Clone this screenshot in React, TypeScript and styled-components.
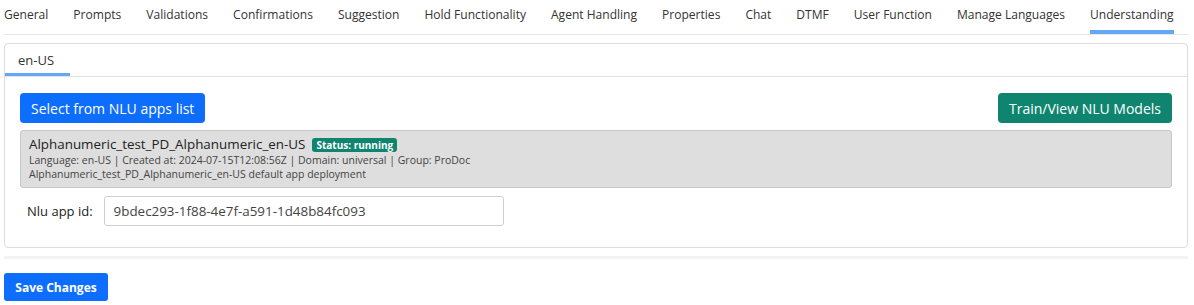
import styled, { createGlobalStyle } from "styled-components";

const tabs = [
  "General",
  "Prompts",
  "Validations",
  "Confirmations",
  "Suggestion",
  "Hold Functionality",
  "Agent Handling",
  "Properties",
  "Chat",
  "DTMF",
  "User Function",
  "Manage Languages",
  "Understanding",
];

const GlobalStyle = createGlobalStyle`
  body {
    margin: 0;
    background: #fff;
    font-family: "Open Sans", "Liberation Sans", sans-serif;
    color: #333;
  }
`;

export default function App() {
  return (
    <>
      <GlobalStyle />
      <Page>
        <TabBar>
          {tabs.map((t) => (
            <Tab key={t} $active={t === "Understanding"}>
              {t}
            </Tab>
          ))}
        </TabBar>
        <Card>
          <CardTabs>
            <LangTab>en-US</LangTab>
          </CardTabs>
          <CardBody>
            <Toolbar>
              <Button $color="#0d6efd">Select from NLU apps list</Button>
              <Button $color="#0f8570">Train/View NLU Models</Button>
            </Toolbar>
            <AppBox>
              <AppTitle>
                Alphanumeric_test_PD_Alphanumeric_en-US
                <Badge>Status: running</Badge>
              </AppTitle>
              <AppMeta>
                Language: en-US | Created at: 2024-07-15T12:08:56Z | Domain: universal | Group: ProDoc
              </AppMeta>
              <AppDesc>Alphanumeric_test_PD_Alphanumeric_en-US default app deployment</AppDesc>
            </AppBox>
            <FieldRow>
              <Label>Nlu app id:</Label>
              <Input readOnly value="9bdec293-1f88-4e7f-a591-1d48b84fc093" />
            </FieldRow>
          </CardBody>
        </Card>
        <Separator />
        <SaveButton>Save Changes</SaveButton>
      </Page>
    </>
  );
}

const Page = styled.div`
  padding: 0 6px 0 4px;
`;

const TabBar = styled.div`
  display: flex;
  gap: 25px;
  height: 34px;
  border-bottom: 1px solid #e6e6e6;
`;

const Tab = styled.div<{ $active?: boolean }>`
  box-sizing: border-box;
  height: 34px;
  padding-top: 6px;
  font-size: 12.05px;
  color: #333;
  white-space: nowrap;
  border-bottom: 4px solid ${(p) => (p.$active ? "#62a8f7" : "transparent")};
`;

const Card = styled.div`
  margin-top: 8px;
  border: 1px solid #dcdcdc;
  border-radius: 4px;
  height: 203px;
`;

const CardTabs = styled.div`
  display: flex;
  height: 32px;
  border-bottom: 1px solid #e2e2e2;
`;

const LangTab = styled.div`
  box-sizing: border-box;
  width: 65px;
  height: 32px;
  padding: 7px 0 0 13px;
  font-size: 13px;
  color: #333;
  border-bottom: 3px solid #62a8f7;
`;

const CardBody = styled.div`
  padding: 16px 15px 0;
`;

const Toolbar = styled.div`
  display: flex;
  justify-content: space-between;
`;

const Button = styled.button<{ $color: string }>`
  height: 30px;
  padding: 0 11px;
  border: none;
  border-radius: 4px;
  background: ${(p) => p.$color};
  color: #fff;
  font-family: inherit;
  font-size: 14px;
`;

const AppBox = styled.div`
  box-sizing: border-box;
  margin-top: 7px;
  height: 58px;
  padding: 5px 8px;
  background: #dedede;
  border: 1px solid #c9c9c9;
  border-radius: 3px;
`;

const AppTitle = styled.div`
  display: flex;
  align-items: center;
  gap: 7px;
  font-size: 13.4px;
  line-height: 17px;
  color: #222;
`;

const Badge = styled.span`
  padding: 0 4px;
  height: 14px;
  line-height: 14px;
  border-radius: 3px;
  background: #0f8570;
  color: #fff;
  font-size: 10px;
  font-weight: 700;
`;

const AppMeta = styled.div`
  font-size: 10.5px;
  line-height: 14px;
  color: #444;
`;

const AppDesc = styled.div`
  font-size: 10.5px;
  line-height: 14px;
  color: #444;
`;

const FieldRow = styled.div`
  display: flex;
  align-items: center;
  gap: 11px;
  margin-top: 8px;
  padding-left: 7px;
`;

const Label = styled.label`
  font-size: 13px;
  color: #222;
`;

const Input = styled.input`
  box-sizing: border-box;
  width: 400px;
  height: 30px;
  padding: 0 9px;
  border: 1px solid #cfcfcf;
  border-radius: 3px;
  font-family: inherit;
  font-size: 13.4px;
  color: #444;
  outline: none;
`;

const Separator = styled.div`
  margin-top: 8px;
  height: 3px;
  background: #f3f3f3;
`;

const SaveButton = styled.button`
  margin-top: 14px;
  width: 104px;
  height: 28px;
  border: none;
  border-radius: 3px;
  background: #0d6efd;
  color: #fff;
  font-family: inherit;
  font-size: 12px;
  font-weight: 700;
`;
